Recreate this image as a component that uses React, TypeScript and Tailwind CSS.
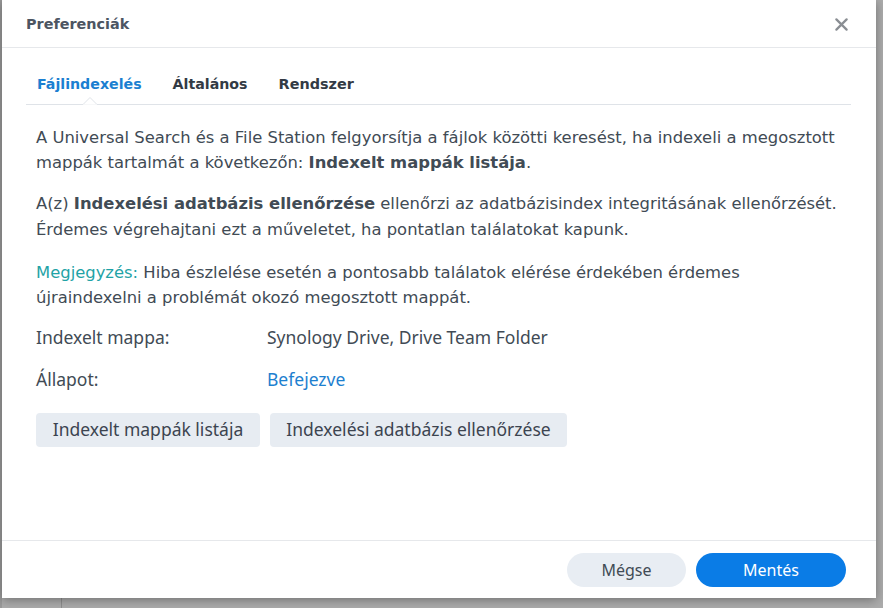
import React from "react";

const verdana = { fontFamily: '"DejaVu Sans", "Bitstream Vera Sans", sans-serif' } as const;

export default function App() {
  return (
    <div className="relative w-[883px] h-[608px] overflow-hidden bg-[#acacac]">
      <div className="absolute left-[61px] top-0 h-full w-px bg-[#8f8f8f]" />
      <div className="absolute left-0 top-0 h-full w-[2px] bg-[#9a9a9a]" />
      <div className="relative z-10 flex pl-[2px]">
        <div
          className="flex h-[598px] w-[874px] flex-col bg-white shadow-[0_2px_10px_rgba(0,0,0,0.35)]"
          style={{ fontFamily: '"Noto Sans", sans-serif' }}
        >
          {/* header */}
          <div className="flex h-[48px] shrink-0 items-center justify-between border-b border-[#e6e8eb] pl-[24px] pr-[28px]">
            <span className="mt-[2px] text-[14.4px] font-bold text-[#4c5562]" style={verdana}>
              Preferenciák
            </span>
            <svg width="13" height="13" viewBox="0 0 14 14" className="mt-[1px]">
              <path d="M1.5 1.5 L12.5 12.5 M12.5 1.5 L1.5 12.5" stroke="#8a8e93" strokeWidth="2.4" strokeLinecap="round" />
            </svg>
          </div>

          {/* tabs */}
          <div className="relative ml-[24px] mr-[25px] flex h-[57px] shrink-0 items-center gap-[31px] border-b border-[#dfe3e8] pl-[11px] pt-[17px]">
            <span className="text-[14.2px] font-bold text-[#1b7fd1]" style={verdana}>Fájlindexelés</span>
            <span className="text-[14.2px] font-bold text-[#323a44]" style={verdana}>Általános</span>
            <span className="text-[14.4px] font-bold text-[#323a44]" style={verdana}>Rendszer</span>
            <svg width="14" height="8" viewBox="0 0 14 8" className="absolute bottom-[-1px] left-[57px]">
              <path d="M0 7.5 L7 0.5 L14 7.5" fill="white" stroke="#dfe3e8" strokeWidth="1" />
              <rect x="0" y="7.5" width="14" height="1" fill="white" />
            </svg>
          </div>

          {/* body */}
          <div className="flex flex-1 flex-col pl-[34px] pr-[20px] pt-[19.5px] text-[#414b55]">
            <div className="whitespace-nowrap text-[16.4px] leading-[25px]" style={verdana}>
              <p>
                A Universal Search és a File Station felgyorsítja a fájlok közötti keresést, ha indexeli a megosztott
                <br />
                mappák tartalmát a következőn: <b>Indexelt mappák listája</b>.
              </p>
              <p className="mt-[16px] leading-[26px]">
                A(z) <b>Indexelési adatbázis ellenőrzése</b> ellenőrzi az adatbázisindex integritásának ellenőrzését.
                <br />
                Érdemes végrehajtani ezt a műveletet, ha pontatlan találatokat kapunk.
              </p>
              <p className="mt-[17px]">
                <span className="text-[#1fa3a6]">Megjegyzés:</span> Hiba észlelése esetén a pontosabb találatok elérése érdekében érdemes
                <br />
                újraindexelni a problémát okozó megosztott mappát.
              </p>
            </div>

            <div className="mt-[16px] flex h-[24px] items-center text-[17.5px]">
              <span className="w-[231px]">Indexelt mappa:</span>
              <span>Synology Drive, Drive Team Folder</span>
            </div>
            <div className="mt-[18px] flex h-[24px] items-center text-[17.5px]">
              <span className="w-[231px]">Állapot:</span>
              <span className="text-[#1d80cf]">Befejezve</span>
            </div>

            <div className="mt-[21px] flex gap-[10px]">
              <button className="h-[34px] w-[224px] rounded-[4px] bg-[#e7ecf2] text-[17.5px] text-[#3c4450]">
                Indexelt mappák listája
              </button>
              <button className="h-[34px] w-[297px] rounded-[4px] bg-[#e7ecf2] text-[17.5px] text-[#3c4450]">
                Indexelési adatbázis ellenőrzése
              </button>
            </div>
          </div>

          {/* footer */}
          <div className="flex h-[58px] shrink-0 items-center justify-end gap-[10px] border-t border-[#e6e8eb] pr-[30px]">
            <button className="h-[34px] w-[119px] rounded-full bg-[#e8edf3] text-[16px] text-[#414b55]">Mégse</button>
            <button className="h-[34px] w-[150px] rounded-full bg-[#0a7ce6] text-[16px] text-white">Mentés</button>
          </div>
        </div>
      </div>
    </div>
  );
}
